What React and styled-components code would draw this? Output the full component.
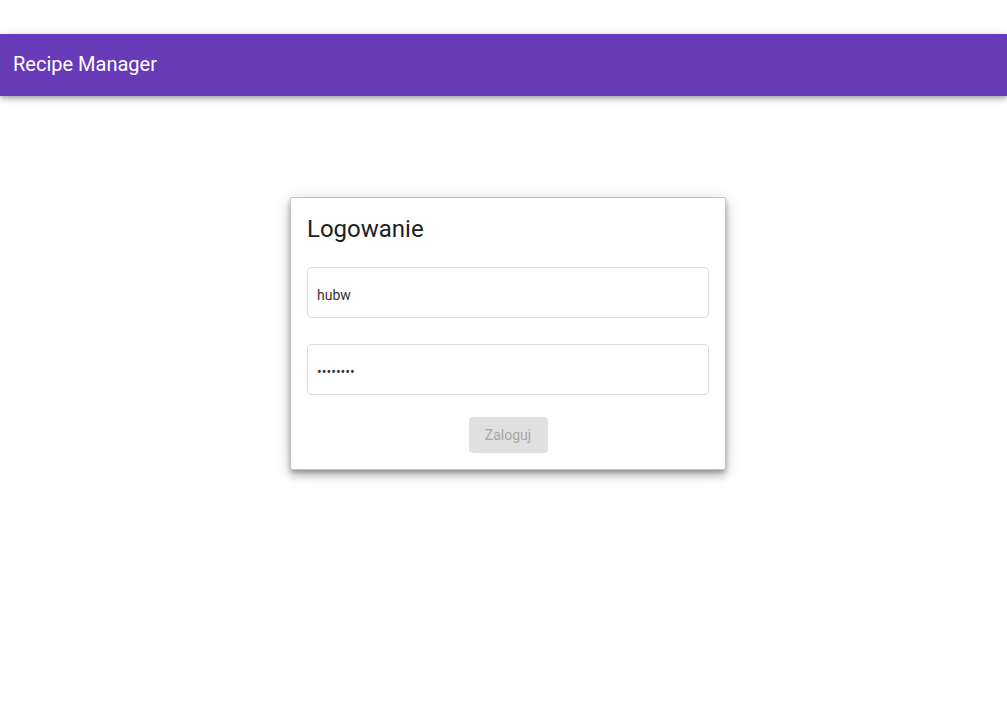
import React from 'react'
import styled, { createGlobalStyle } from 'styled-components'

const Global = createGlobalStyle`
  html, body {
    margin: 0;
    padding: 0;
    background: #fff;
    font-family: Roboto, "Helvetica Neue", sans-serif;
  }
`

const Page = styled.div`
  box-sizing: border-box;
  min-height: 100vh;
  padding-top: 34px;
`

const Toolbar = styled.header`
  height: 62px;
  box-sizing: border-box;
  display: flex;
  align-items: center;
  padding: 0 13px 2px;
  background: #673ab7;
  color: #fff;
  font-size: 20px;
  font-weight: 400;
  box-shadow: 0 2px 4px -1px rgba(0,0,0,.2), 0 4px 5px 0 rgba(0,0,0,.14), 0 1px 10px 0 rgba(0,0,0,.12);
`

const Main = styled.main`
  display: flex;
  justify-content: center;
  padding: 101px 0 40px 9px;
`

const Card = styled.form`
  width: 402px;
  padding: 16px;
  border: 1px solid #c4c4c4;
  border-radius: 2px;
  background: #fff;
  box-shadow: 0 3px 5px -1px rgba(0,0,0,.3), 0 6px 10px 0 rgba(0,0,0,.2), 0 1px 18px 0 rgba(0,0,0,.12);
  display: flex;
  flex-direction: column;
`

const Title = styled.h2`
  margin: 1px 0 24px;
  font-size: 24px;
  font-weight: 400;
  color: #212121;
  line-height: 28px;
`

const Field = styled.input`
  box-sizing: border-box;
  width: 100%;
  height: 51px;
  margin-bottom: ${({ last }) => (last ? '22px' : '26px')};
  padding: 5px 9px 0;
  border: 1px solid #dcdcdc;
  border-radius: 4px;
  font-family: Roboto, sans-serif;
  font-size: 14px;
  color: #333;
  outline: none;
`

const Actions = styled.div`
  display: flex;
  justify-content: center;
`

const Button = styled.button`
  min-width: 79px;
  height: 36px;
  padding: 0 16px;
  border: none;
  border-radius: 4px;
  background: #e0e0e0;
  color: #a6a6a6;
  font-family: Roboto, sans-serif;
  font-size: 14px;
  font-weight: 400;
  cursor: default;
`

export default function App() {
  return (
    <Page>
      <Global />
      <Toolbar>Recipe Manager</Toolbar>
      <Main>
        <Card onSubmit={e => e.preventDefault()}>
          <Title>Logowanie</Title>
          <Field type="text" defaultValue="hubw" />
          <Field type="password" defaultValue="12345678" last />
          <Actions>
            <Button type="submit" disabled>Zaloguj</Button>
          </Actions>
        </Card>
      </Main>
    </Page>
  )
}
